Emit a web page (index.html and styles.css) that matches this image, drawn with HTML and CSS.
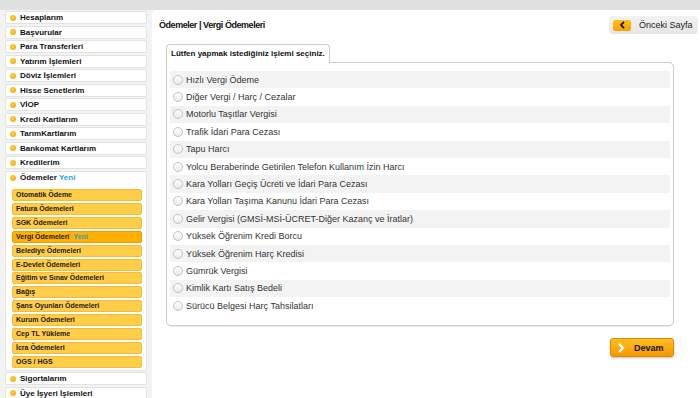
FILE: index.html
```html
<!DOCTYPE html>
<html lang="tr">
<head>
    <meta charset="UTF-8">
    <title>Vergi Ödemeleri</title>
    <link rel="stylesheet" href="styles.css">
</head>
<body>

<div class="topbar"></div>

<div class="page">
    <!-- Left menu -->
    <ul class="menu">
        <li><span class="dot"></span>Hesaplarım</li>
        <li><span class="dot"></span>Başvurular</li>
        <li><span class="dot"></span>Para Transferleri</li>
        <li><span class="dot"></span>Yatırım İşlemleri</li>
        <li><span class="dot"></span>Döviz İşlemleri</li>
        <li><span class="dot"></span>Hisse Senetlerim</li>
        <li><span class="dot"></span>VİOP</li>
        <li><span class="dot"></span>Kredi Kartlarım</li>
        <li><span class="dot"></span>TarımKartlarım</li>
        <li><span class="dot"></span>Bankomat Kartlarım</li>
        <li><span class="dot"></span>Kredilerim</li>
        <li class="open">
            <div class="open-title"><span class="dot"></span>Ödemeler <span class="new">Yeni</span></div>
            <ul class="submenu">
                <li>Otomatik Ödeme</li>
                <li>Fatura Ödemeleri</li>
                <li>SGK Ödemeleri</li>
                <li class="active">Vergi Ödemeleri <span class="new">Yeni</span></li>
                <li>Belediye Ödemeleri</li>
                <li>E-Devlet Ödemeleri</li>
                <li>Eğitim ve Sınav Ödemeleri</li>
                <li>Bağış</li>
                <li>Şans Oyunları Ödemeleri</li>
                <li>Kurum Ödemeleri</li>
                <li>Cep TL Yükleme</li>
                <li>İcra Ödemeleri</li>
                <li>OGS / HGS</li>
            </ul>
        </li>
        <li><span class="dot"></span>Sigortalarım</li>
        <li><span class="dot"></span>Üye İşyeri İşlemleri</li>
    </ul>

    <!-- Main content -->
    <div class="content">
        <div class="head">
            <h1>Ödemeler | Vergi Ödemeleri</h1>
            <a class="back" href="#">
                <span class="back-icon">
                    <svg width="7" height="8" viewBox="0 0 7 8"><path d="M5 0.8 L2 4 L5 7.2" fill="none" stroke="#111" stroke-width="1.8"/></svg>
                </span>
                Önceki Sayfa
            </a>
        </div>

        <div class="form">
            <div class="tab">Lütfen yapmak istediğiniz işlemi seçiniz.</div>
            <div class="box">
                <ul class="options">
                    <li><span class="radio"></span>Hızlı Vergi Ödeme</li>
                    <li><span class="radio"></span>Diğer Vergi / Harç / Cezalar</li>
                    <li><span class="radio"></span>Motorlu Taşıtlar Vergisi</li>
                    <li><span class="radio"></span>Trafik İdari Para Cezası</li>
                    <li><span class="radio"></span>Tapu Harcı</li>
                    <li><span class="radio"></span>Yolcu Beraberinde Getirilen Telefon Kullanım İzin Harcı</li>
                    <li><span class="radio"></span>Kara Yolları Geçiş Ücreti ve İdari Para Cezası</li>
                    <li><span class="radio"></span>Kara Yolları Taşıma Kanunu İdari Para Cezası</li>
                    <li><span class="radio"></span>Gelir Vergisi (GMSİ-MSİ-ÜCRET-Diğer Kazanç ve İratlar)</li>
                    <li><span class="radio"></span>Yüksek Öğrenim Kredi Borcu</li>
                    <li><span class="radio"></span>Yüksek Öğrenim Harç Kredisi</li>
                    <li><span class="radio"></span>Gümrük Vergisi</li>
                    <li><span class="radio"></span>Kimlik Kartı Satış Bedeli</li>
                    <li><span class="radio"></span>Sürücü Belgesi Harç Tahsilatları</li>
                </ul>
            </div>
            <div class="actions">
                <a class="devam" href="#">
                    <svg width="8" height="10" viewBox="0 0 8 10"><path d="M2 1 L6 5 L2 9" fill="none" stroke="#fff" stroke-width="2.2"/></svg>
                    <span>Devam</span>
                </a>
            </div>
        </div>
    </div>
</div>

</body>
</html>
```

FILE: styles.css
```css
body {
    margin: 0;
    font-family: "Liberation Sans", Arial, sans-serif;
    background-color: #f3f3f3;
    color: #222;
    height: 398px;
    overflow: hidden;
}
.topbar {
    height: 10px;
    background-color: #e1e1e1;
}
.page {
    display: flex;
    height: 388px;
}

/* Left menu */
.menu {
    list-style: none;
    margin: 0;
    padding: 1px 0 0 5px;
    width: 142px;
    flex: 0 0 142px;
}
.menu > li {
    box-sizing: border-box;
    height: 13px;
    margin-bottom: 1.55px;
    background-color: #fff;
    border: 1px solid #e2e2e2;
    border-radius: 2px;
    font-size: 8px;
    font-weight: bold;
    line-height: 11px;
    color: #111;
    display: flex;
    align-items: center;
}
.dot {
    display: inline-block;
    width: 6px;
    height: 6px;
    border-radius: 50%;
    background: radial-gradient(circle at 40% 35%, #ffd23c, #f2a000);
    margin: 0 4px 0 4px;
}
.new {
    color: #25a6cf;
    margin-left: 2px;
}
.menu > li.open {
    height: auto;
    display: block;
    padding-bottom: 2px;
}
.open-title {
    display: flex;
    align-items: center;
    height: 11px;
}
.submenu {
    list-style: none;
    margin: 6px 0 0 6px;
    padding: 0;
    width: 130px;
}
.submenu li {
    box-sizing: border-box;
    height: 12px;
    margin-bottom: 1.92px;
    padding-left: 3px;
    background-color: #ffcd48;
    border: 1px solid #f4bc3a;
    border-radius: 2px;
    font-size: 7px;
    font-weight: bold;
    line-height: 10px;
    color: #1a1a1a;
}
.submenu li:last-child {
    margin-bottom: 0;
}
.submenu li.active {
    background-color: #ffb000;
    border-color: #ee9d00;
}

/* Main content */
.content {
    flex: 1;
    margin-left: 5px;
    background-color: #fff;
    border-top-left-radius: 5px;
}
.head {
    display: flex;
    justify-content: space-between;
    align-items: center;
    padding: 6px 2px 0 7px;
    height: 18px;
}
.head h1 {
    margin: 0;
    font-size: 9px;
    letter-spacing: -0.45px;
    font-weight: bold;
    color: #111;
}
.back {
    display: flex;
    align-items: center;
    box-sizing: border-box;
    width: 89px;
    height: 18px;
    padding-left: 4px;
    background: linear-gradient(#f2f2f2, #e6e6e6);
    border-radius: 4px;
    color: #222;
    font-size: 9px;
    text-decoration: none;
}
.back-icon {
    display: flex;
    align-items: center;
    justify-content: center;
    width: 18px;
    height: 11px;
    margin-right: 8px;
    background: linear-gradient(#ffc21a, #f79f00);
    border-radius: 2px;
}

.form {
    margin: 8px 26px 0 14px;
}
.tab {
    position: relative;
    display: inline-block;
    margin-bottom: -1px;
    padding: 0 4px;
    height: 18px;
    line-height: 18px;
    background-color: #fff;
    border: 1px solid #cdcdcd;
    border-bottom: none;
    border-radius: 4px 4px 0 0;
    font-size: 8px;
    font-weight: bold;
    color: #111;
}
.box {
    border: 1px solid #cdcdcd;
    border-radius: 0 5px 5px 5px;
    padding: 8px 3px 11px 3px;
    box-shadow: 0 1px 1px rgba(0, 0, 0, 0.08);
}
.options {
    list-style: none;
    margin: 0;
    padding: 0;
}
.options li {
    display: flex;
    align-items: center;
    height: 17.4px;
    font-size: 9px;
    color: #333;
}
.options li:nth-child(odd) {
    background-color: #f3f3f3;
}
.radio {
    box-sizing: border-box;
    width: 10px;
    height: 10px;
    margin: 0 3px 0 3px;
    border: 1px solid #c2c2c2;
    border-radius: 50%;
    background: linear-gradient(#fff, #ebebeb);
}

.actions {
    display: flex;
    justify-content: flex-end;
    margin-top: 12px;
}
.devam {
    display: flex;
    align-items: center;
    box-sizing: border-box;
    width: 64px;
    height: 19px;
    padding-left: 6px;
    background: linear-gradient(#ffbf22, #f69800);
    border: 1px solid #e08a00;
    border-radius: 3px;
    box-shadow: 0 1px 2px rgba(0, 0, 0, 0.25);
    text-decoration: none;
    color: #111;
    font-size: 9px;
    font-weight: bold;
}
.devam span {
    margin-left: 9px;
}
```
